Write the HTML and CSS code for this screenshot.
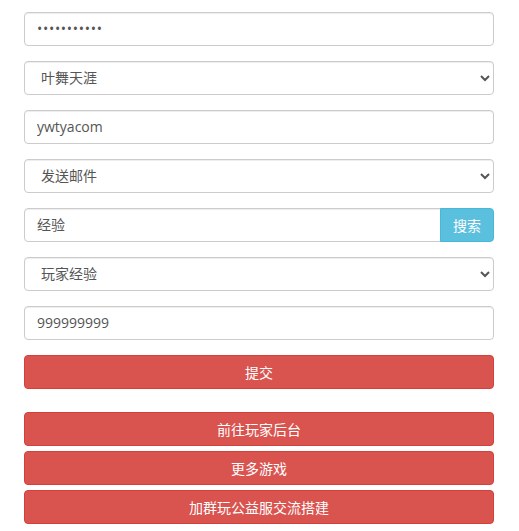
FILE: index.html
```html
<!DOCTYPE html>
<html lang="zh-CN">
<head>
    <meta charset="UTF-8">
    <title>玩家后台</title>
    <link rel="stylesheet" href="styles.css">
</head>
<body>
<div class="wrap">
    <form class="panel">
        <div class="form-group">
            <input class="form-control pwd" type="password" value="12345678901">
        </div>
        <div class="form-group">
            <select class="form-control">
                <option>叶舞天涯</option>
            </select>
        </div>
        <div class="form-group">
            <input class="form-control" type="text" value="ywtyacom">
        </div>
        <div class="form-group">
            <select class="form-control">
                <option>发送邮件</option>
            </select>
        </div>
        <div class="form-group input-group">
            <input class="form-control" type="text" value="经验">
            <button class="btn btn-info" type="button">搜索</button>
        </div>
        <div class="form-group">
            <select class="form-control">
                <option>玩家经验</option>
            </select>
        </div>
        <div class="form-group">
            <input class="form-control" type="text" value="999999999">
        </div>
        <button class="btn btn-danger btn-block" type="button">提交</button>
    </form>
    <div class="links">
        <button class="btn btn-danger btn-block" type="button">前往玩家后台</button>
        <button class="btn btn-danger btn-block" type="button">更多游戏</button>
        <button class="btn btn-danger btn-block" type="button">加群玩公益服交流搭建</button>
    </div>
</div>
</body>
</html>
```

FILE: styles.css
```css
*{
    padding: 0;
    margin: 0;
    box-sizing: border-box;
}
body{
    background-color: #ffffff;
    font-family: "Open Sans", "Noto Sans CJK SC", sans-serif;
    font-size: 14px;
    color: #555555;
}
.wrap{
    width: 470px;
    margin: 12px 0 0 24px;
}
.form-group{
    margin-bottom: 15px;
}
.form-control{
    display: block;
    width: 100%;
    height: 34px;
    padding: 5px 12px 7px;
    font-family: inherit;
    font-size: 14px;
    color: #555555;
    background-color: #ffffff;
    border: 1px solid #cccccc;
    border-radius: 4px;
    box-shadow: inset 0 1px 1px rgba(0, 0, 0, .075);
    outline: none;
}
.pwd{
    letter-spacing: 0.7px;
}
.input-group{
    display: flex;
}
.input-group .form-control{
    flex: 1;
    border-radius: 4px 0 0 4px;
}
.input-group .btn{
    width: 54px;
    border-radius: 0 4px 4px 0;
    margin-left: -1px;
}
.btn{
    height: 34px;
    padding: 6px 12px;
    font-family: inherit;
    font-size: 14px;
    color: #ffffff;
    border: 1px solid transparent;
    border-radius: 4px;
    cursor: pointer;
}
.btn-info{
    background-color: #5bc0de;
    border-color: #46b8da;
}
.btn-danger{
    background-color: #d9534f;
    border-color: #d43f3a;
}
.btn-block{
    display: block;
    width: 100%;
}
.links{
    margin-top: 23px;
}
.links .btn{
    margin-bottom: 5px;
}
```
